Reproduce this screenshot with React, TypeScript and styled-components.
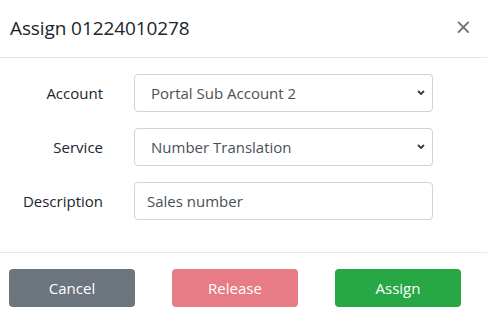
import React from 'react';
import styled, { createGlobalStyle } from 'styled-components';

const GlobalStyle = createGlobalStyle`
  html, body {
    margin: 0;
    padding: 0;
    background: #fff;
  }
  body {
    font-family: 'Open Sans', 'Noto Sans', sans-serif;
    color: #212529;
  }
  * {
    box-sizing: border-box;
  }
`;

const Modal = styled.div`
  width: 487px;
  height: 317px;
  background: #fff;
  display: flex;
  flex-direction: column;
`;

const Header = styled.div`
  height: 58px;
  padding: 0 15px 0 10px;
  display: flex;
  align-items: center;
  justify-content: space-between;
  border-bottom: 1px solid #e5e7ea;
`;

const Title = styled.h5`
  margin: 0 0 1px;
  font-size: 19px;
  font-weight: 500;
  letter-spacing: -0.1px;
  color: #212529;
`;

const Close = styled.button`
  border: 0;
  background: none;
  padding: 0;
  font-family: 'DejaVu Sans', sans-serif;
  font-size: 21px;
  line-height: 1;
  font-weight: 400;
  color: #6f6f6f;
  cursor: pointer;
  margin-top: -2px;
`;

const Body = styled.div`
  padding: 16px 54px 32px 0;
  display: flex;
  flex-direction: column;
  gap: 16px;
  border-bottom: 1px solid #e5e7ea;
`;

const Row = styled.div`
  display: grid;
  grid-template-columns: 103px 1fr;
  column-gap: 31px;
  align-items: center;
`;

const Label = styled.label`
  text-align: right;
  font-size: 15px;
  color: #212529;
`;

const SelectWrap = styled.div`
  position: relative;
`;

const Select = styled.select`
  width: 100%;
  height: 38px;
  appearance: none;
  border: 1px solid #ced4da;
  border-radius: 4px;
  background: #fff;
  padding: 0 28px 0 16px;
  font-family: inherit;
  font-size: 15px;
  color: #495057;
`;

const Chevron = styled.svg`
  position: absolute;
  right: 8px;
  top: 16px;
  pointer-events: none;
`;

const Input = styled.input`
  width: 100%;
  height: 38px;
  border: 1px solid #ced4da;
  border-radius: 4px;
  padding: 0 12px;
  font-family: inherit;
  font-size: 15px;
  color: #495057;
`;

const Footer = styled.div`
  padding: 16px 26px 10px 9px;
  display: flex;
  justify-content: space-between;
`;

const Button = styled.button<{ $bg: string }>`
  width: 126px;
  height: 38px;
  border: 0;
  border-radius: 4px;
  background: ${({ $bg }) => $bg};
  color: #fff;
  font-family: inherit;
  font-size: 15px;
  cursor: pointer;
`;

const ChevronIcon = () => (
  <Chevron width="8" height="5" viewBox="0 0 8 5">
    <path d="M1 1 L4 4 L7 1" fill="none" stroke="#343a40" strokeWidth="1.8" />
  </Chevron>
);

const App = () => (
  <>
    <GlobalStyle />
    <Modal>
      <Header>
        <Title>Assign 01224010278</Title>
        <Close aria-label="Close">×</Close>
      </Header>
      <Body>
        <Row>
          <Label>Account</Label>
          <SelectWrap>
            <Select defaultValue="psa2">
              <option value="psa2">Portal Sub Account 2</option>
            </Select>
            <ChevronIcon />
          </SelectWrap>
        </Row>
        <Row>
          <Label>Service</Label>
          <SelectWrap>
            <Select defaultValue="nt">
              <option value="nt">Number Translation</option>
            </Select>
            <ChevronIcon />
          </SelectWrap>
        </Row>
        <Row>
          <Label>Description</Label>
          <Input defaultValue="Sales number" />
        </Row>
      </Body>
      <Footer>
        <Button $bg="#6c757d">Cancel</Button>
        <Button $bg="#e87c86">Release</Button>
        <Button $bg="#28a745">Assign</Button>
      </Footer>
    </Modal>
  </>
);

export default App;
